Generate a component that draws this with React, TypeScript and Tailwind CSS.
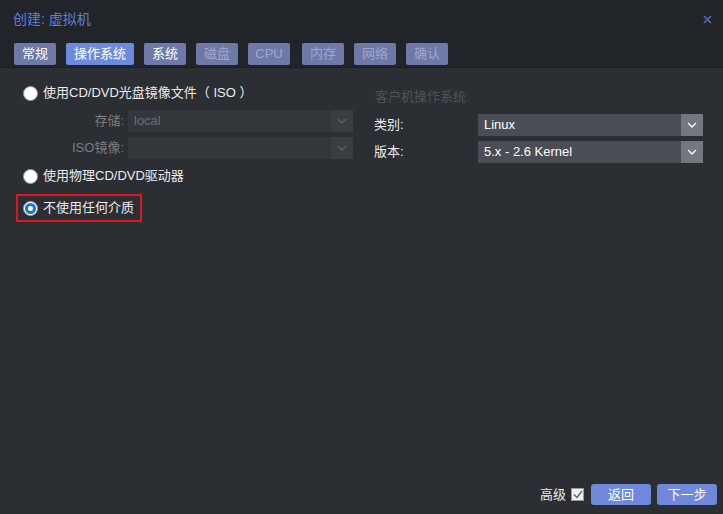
const font = { fontFamily: '"Liberation Sans", "Noto Sans CJK SC", sans-serif' };

const tabs = [
  { label: "常规", w: "w-[42px]", state: "on" },
  { label: "操作系统", w: "w-[68px]", state: "active" },
  { label: "系统", w: "w-[42px]", state: "on" },
  { label: "磁盘", w: "w-[42px]", state: "off" },
  { label: "CPU", w: "w-[42px] mr-[2px]", state: "off" },
  { label: "内存", w: "w-[42px]", state: "off" },
  { label: "网络", w: "w-[42px]", state: "off" },
  { label: "确认", w: "w-[42px]", state: "off" },
];

const Chevron = ({ color }: { color: string }) => (
  <svg width="10" height="6" viewBox="0 0 10 6" fill="none">
    <path d="M1 1l4 4 4-4" stroke={color} strokeWidth="1.3" />
  </svg>
);

const Radio = ({ checked }: { checked?: boolean }) => (
  <span className="w-[15px] h-[15px] rounded-full bg-white border border-[#9a9a9a] flex items-center justify-center shrink-0">
    {checked && <span className="w-[11px] h-[11px] rounded-full bg-white border-[3px] border-[#1976d2] box-border" />}
  </span>
);

const Select = ({ value, disabled }: { value: string; disabled?: boolean }) => (
  <div className={`flex h-[22px] w-[225px] ${disabled ? "bg-[#33363b]" : "bg-[#4a4d54]"}`}>
    <div className={`flex-1 px-[6px] flex items-center text-[13px] ${disabled ? "text-[#6c6f74]" : "text-white"}`}>{value}</div>
    <div className={`w-[22px] flex items-center justify-center ${disabled ? "bg-[#3a3d42]" : "bg-[#74777d]"}`}>
      <Chevron color={disabled ? "#5d6065" : "#ffffff"} />
    </div>
  </div>
);

export default function App() {
  return (
    <div className="w-[723px] h-[514px] flex flex-col bg-[#2b2e33] overflow-hidden" style={font}>
      <div className="h-[68px] bg-[#212429] border-b border-[#1c1e22] flex flex-col">
        <div className="flex items-center justify-between h-[38px] pl-[13px] pr-[11px]">
          <span className="text-[14px] text-[#5b80de]">创建: 虚拟机</span>
          <svg width="9" height="9" viewBox="0 0 9 9">
            <path d="M1 1l7 7M8 1L1 8" stroke="#5b6bb3" strokeWidth="1.6" />
          </svg>
        </div>
        <div className="flex gap-[10px] pl-[14px] mt-[5px]">
          {tabs.map((t) => (
            <div
              key={t.label}
              className={`${t.w} h-[22px] rounded-[2px] flex items-center justify-center text-[13px] ${
                t.state === "active"
                  ? "bg-[#6d8bdc] text-white"
                  : t.state === "on"
                  ? "bg-[#6e79a8] text-white"
                  : "bg-[#6e79a8] text-[#a0a8c8]"
              }`}
            >
              {t.label}
            </div>
          ))}
        </div>
      </div>

      <div className="flex-1 flex flex-col">
        <div className="flex pl-[16px] pt-[14px] gap-[21px]">
          <div className="w-[337px] flex flex-col text-[13px]">
            <div className="h-[22px] flex items-center gap-[5px] pl-[7px] text-[#ececec]">
              <Radio />
              <span>使用CD/DVD光盘镜像文件（ ISO ）</span>
            </div>
            <div className="flex items-center mt-[6px]">
              <span className="w-[112px] text-right pr-[4px] text-[#7a7d82]">存储:</span>
              <Select value="local" disabled />
            </div>
            <div className="flex items-center mt-[5px]">
              <span className="w-[112px] text-right pr-[4px] text-[#7a7d82]">ISO镜像:</span>
              <Select value="" disabled />
            </div>
            <div className="h-[22px] flex items-center gap-[5px] pl-[7px] mt-[6px] text-[#ececec]">
              <Radio />
              <span>使用物理CD/DVD驱动器</span>
            </div>
            <div className="h-[28px] w-[126px] mt-[7px] border-2 border-[#e0161e] flex items-center gap-[5px] pl-[5px] text-[#ececec]">
              <Radio checked />
              <span>不使用任何介质</span>
            </div>
          </div>

          <div className="w-[329px] flex flex-col text-[13px]">
            <div className="h-[22px] flex items-center text-[#4f5359] pl-[1px] mt-[4px]">客户机操作系统:</div>
            <div className="flex items-center mt-[6px]">
              <span className="w-[104px] text-[#ececec]">类别:</span>
              <Select value="Linux" />
            </div>
            <div className="flex items-center mt-[5px]">
              <span className="w-[104px] text-[#ececec]">版本:</span>
              <Select value="5.x - 2.6 Kernel" />
            </div>
          </div>
        </div>

        <div className="mt-auto flex items-center justify-end pr-[6px] pb-[9px] gap-[6px] text-[13px]">
          <div className="flex items-center gap-[5px] text-[#ececec] mr-[1px]">
            <span>高级</span>
            <span className="w-[13px] h-[13px] bg-[#f2f2f2] border border-[#9a9a9a] flex items-center justify-center">
              <svg width="10" height="9" viewBox="0 0 10 9" fill="none">
                <path d="M1 4.5l3 3 5-6.5" stroke="#5c5c5c" strokeWidth="1.3" />
              </svg>
            </span>
          </div>
          <button className="w-[60px] h-[21px] rounded-[3px] bg-[#6f88d9] text-white text-[13px]">返回</button>
          <button className="w-[60px] h-[21px] rounded-[3px] bg-[#6f88d9] text-white text-[13px]">下一步</button>
        </div>
      </div>
    </div>
  );
}
